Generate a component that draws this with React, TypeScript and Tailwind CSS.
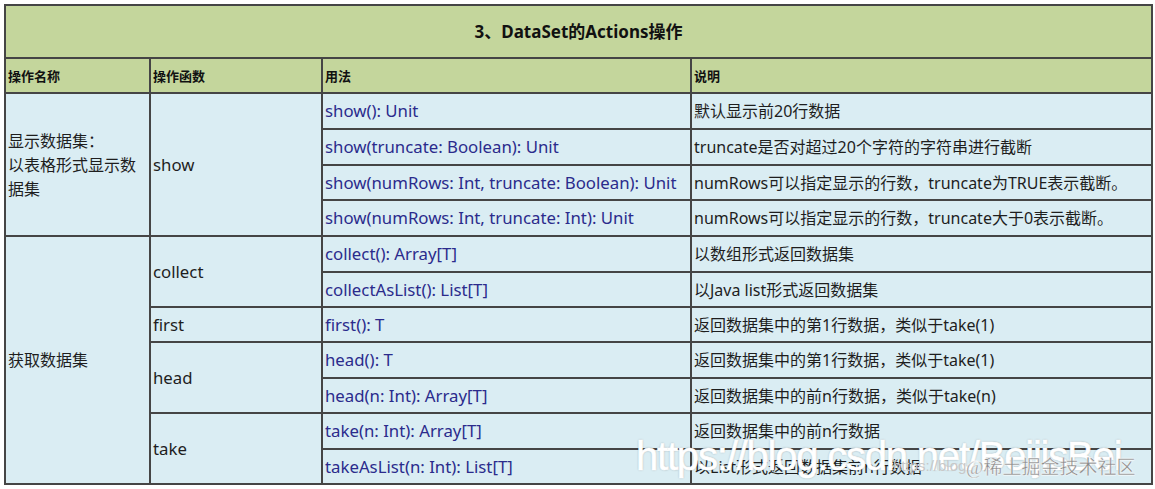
const cjk = { fontFamily: '"Noto Sans", "Noto Sans CJK SC", sans-serif' };

type Row = { code: string; desc: string };

const showRows: Row[] = [
  { code: "show(): Unit", desc: "默认显示前20行数据" },
  { code: "show(truncate: Boolean): Unit", desc: "truncate是否对超过20个字符的字符串进行截断" },
  { code: "show(numRows: Int, truncate: Boolean): Unit", desc: "numRows可以指定显示的行数，truncate为TRUE表示截断。" },
  { code: "show(numRows: Int, truncate: Int): Unit", desc: "numRows可以指定显示的行数，truncate大于0表示截断。" },
];

const td = "border-2 border-[#454545] px-[2px] align-middle";
const code = `${td} text-[#2b2b8c] text-[16.8px]`;
const desc = `${td} text-[#1e1e1e]`;

export default function App() {
  return (
    <div className="w-[1155px] h-[489px] bg-white relative overflow-hidden" style={cjk}>
      <table className="ml-[4px] mt-[4px] border-collapse table-fixed w-[1147px] text-[16px] leading-[24px]">
        <colgroup>
          <col className="w-[145px]" />
          <col className="w-[172px]" />
          <col className="w-[369px]" />
          <col className="w-[461px]" />
        </colgroup>
        <tbody>
          <tr className="h-[53px] bg-[#c4d69c]">
            <td colSpan={4} className={`${td} text-center font-bold text-[17px] text-[#111]`}>
              3、DataSet的Actions操作
            </td>
          </tr>
          <tr className="h-[35px] bg-[#c4d69c] font-bold text-[13px] text-[#111]">
            <td className={td}>操作名称</td>
            <td className={td}>操作函数</td>
            <td className={td}>用法</td>
            <td className={td}>说明</td>
          </tr>
          {showRows.map((r, i) => (
            <tr key={r.code} className={`${i % 2 === 1 || i === 0 ? "h-[36px]" : "h-[35px]"} bg-[#daedf3]`}>
              {i === 0 && (
                <>
                  <td rowSpan={4} className={`${desc} pr-1`}>
                    显示数据集：<br />以表格形式显示数据集
                  </td>
                  <td rowSpan={4} className={`${desc} text-[16.8px]`}>show</td>
                </>
              )}
              <td className={code}>{r.code}</td>
              <td className={desc}>{r.desc}</td>
            </tr>
          ))}
          <tr className="h-[36px] bg-[#daedf3]">
            <td rowSpan={8} className={desc}>获取数据集</td>
            <td rowSpan={2} className={`${desc} text-[16.8px]`}>collect</td>
            <td className={code}>collect(): Array[T]</td>
            <td className={desc}>以数组形式返回数据集</td>
          </tr>
          <tr className="h-[35px] bg-[#daedf3]">
            <td className={code}>collectAsList(): List[T]</td>
            <td className={desc}>以Java list形式返回数据集</td>
          </tr>
          <tr className="h-[35px] bg-[#daedf3]">
            <td className={`${desc} text-[16.8px]`}>first</td>
            <td className={code}>first(): T</td>
            <td className={desc}>返回数据集中的第1行数据，类似于take(1)</td>
          </tr>
          <tr className="h-[36px] bg-[#daedf3]">
            <td rowSpan={2} className={`${desc} text-[16.8px]`}>head</td>
            <td className={code}>head(): T</td>
            <td className={desc}>返回数据集中的第1行数据，类似于take(1)</td>
          </tr>
          <tr className="h-[35px] bg-[#daedf3]">
            <td className={code}>head(n: Int): Array[T]</td>
            <td className={desc}>返回数据集中的前n行数据，类似于take(n)</td>
          </tr>
          <tr className="h-[36px] bg-[#daedf3]">
            <td rowSpan={2} className={`${desc} text-[16.8px]`}>take</td>
            <td className={code}>take(n: Int): Array[T]</td>
            <td className={desc}>返回数据集中的前n行数据</td>
          </tr>
          <tr className="h-[35px] bg-[#daedf3]">
            <td className={code}>takeAsList(n: Int): List[T]</td>
            <td className={desc}>以List形式返回数据集前n行数据</td>
          </tr>
        </tbody>
      </table>

      {/* watermark */}
      <div
        className="absolute left-[636px] top-[432px] text-[40px] leading-[48px] tracking-[-1.2px] text-white whitespace-nowrap"
        style={{ fontFamily: '"Liberation Sans", Arial, sans-serif', WebkitTextStroke: "0.6px #fff", textShadow: "0 0 2px rgba(0,0,0,0.35)" }}
      >
        https://blog.csdn.net/BeijisBei
      </div>
      <div
        className="absolute left-[893px] top-[456px] text-[15px] leading-[20px] text-[#c8c8c8] whitespace-nowrap"
        style={{ fontFamily: '"Liberation Sans", sans-serif' }}
      >
        https://blog
      </div>
      <div
        className="absolute left-[966px] top-[456px] text-[19px] leading-[24px] text-[#8a8a8a] whitespace-nowrap"
        style={{ fontFamily: '"Liberation Serif", "Noto Sans CJK SC", serif', WebkitTextStroke: "0.3px #fff", textShadow: "0 0 2px #fff" }}
      >
        @稀土掘金技术社区
      </div>
    </div>
  );
}
